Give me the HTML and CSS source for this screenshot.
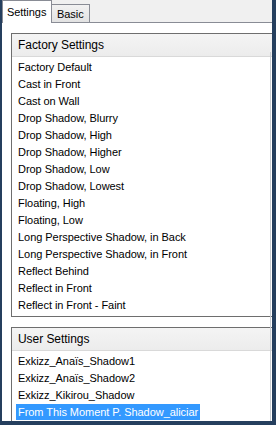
FILE: index.html
```html
<!DOCTYPE html>
<html>
<head>
<meta charset="utf-8">
<link rel="stylesheet" href="styles.css">
</head>
<body>
<div class="window">
  <div class="tabs">
    <div class="tab active">Settings</div>
    <div class="tab">Basic</div>
  </div>
  <div class="panel">
    <div class="group factory">
      <div class="group-head">Factory Settings</div>
      <ul class="list">
        <li><span>Factory Default</span></li>
        <li><span>Cast in Front</span></li>
        <li><span>Cast on Wall</span></li>
        <li><span>Drop Shadow, Blurry</span></li>
        <li><span>Drop Shadow, High</span></li>
        <li><span>Drop Shadow, Higher</span></li>
        <li><span>Drop Shadow, Low</span></li>
        <li><span>Drop Shadow, Lowest</span></li>
        <li><span>Floating, High</span></li>
        <li><span>Floating, Low</span></li>
        <li><span>Long Perspective Shadow, in Back</span></li>
        <li><span>Long Perspective Shadow, in Front</span></li>
        <li><span>Reflect Behind</span></li>
        <li><span>Reflect in Front</span></li>
        <li><span>Reflect in Front - Faint</span></li>
      </ul>
    </div>
    <div class="group user">
      <div class="group-head">User Settings</div>
      <ul class="list">
        <li><span>Exkizz_Anaïs_Shadow1</span></li>
        <li><span>Exkizz_Anaïs_Shadow2</span></li>
        <li><span>Exkizz_Kikirou_Shadow</span></li>
        <li class="selected"><span>From This Moment P. Shadow_aliciar</span></li>
      </ul>
    </div>
  </div>
</div>
</body>
</html>
```
FILE: styles.css
```css
html, body {
  margin: 0;
  padding: 0;
}
body {
  width: 276px;
  height: 425px;
  overflow: hidden;
  font-family: "Liberation Sans", Arial, sans-serif;
  font-size: 11px;
  letter-spacing: -0.05px;
  color: #000;
}
.window {
  box-sizing: border-box;
  width: 276px;
  height: 425px;
  display: flex;
  flex-direction: column;
  background: #f0f0f0;
  border-left: 2px solid #253f5e;
  border-right: 4px solid #253f5e;
  border-bottom: 4px solid #253f5e;
  overflow: hidden;
}
.tabs {
  display: flex;
  align-items: flex-end;
  height: 22px;
  border-bottom: 1px solid #898c95;
  flex: none;
}
.tab {
  box-sizing: border-box;
  height: 18px;
  width: 39px;
  padding-left: 5px;
  border: 1px solid #898c95;
  border-bottom: none;
  background: linear-gradient(#f2f2f2, #e2e2e2);
  line-height: 18px;
  font-size: 11px;
  margin-left: -1px;
}
.tab.active {
  height: 23px;
  width: 50px;
  margin-bottom: -1px;
  margin-left: 0;
  background: #fff;
  padding-left: 4px;
  line-height: 22px;
  position: relative;
  z-index: 1;
}
.panel {
  flex: 1;
  background: #fff;
  padding: 10px 0 0 9px;
  display: flex;
  flex-direction: column;
  gap: 10px;
  position: relative;
}
.panel::after {
  content: "";
  position: absolute;
  left: 268px;
  top: 29px;
  bottom: 0;
  width: 1px;
  background: #c9cdd2;
}
.group {
  border: 1px solid #6e6e6e;
  border-right: none;
  margin-right: -4px;
}
.group.user {
  border-bottom: none;
  flex: 1;
}
.group-head {
  height: 22px;
  line-height: 22px;
  padding-left: 6px;
  font-size: 12px;
  background: linear-gradient(#f4f4f4, #ececec);
  border-bottom: 1px solid #d9d9d9;
}
.list {
  list-style: none;
  margin: 0;
  padding: 2px 0 2px 4px;
}
.list li {
  height: 17px;
  line-height: 17px;
  white-space: nowrap;
}
.list li span {
  display: inline-block;
  padding: 0 2px;
  line-height: 16px;
}
.list li.selected span {
  background: #3399ff;
  color: #fff;
}
```
